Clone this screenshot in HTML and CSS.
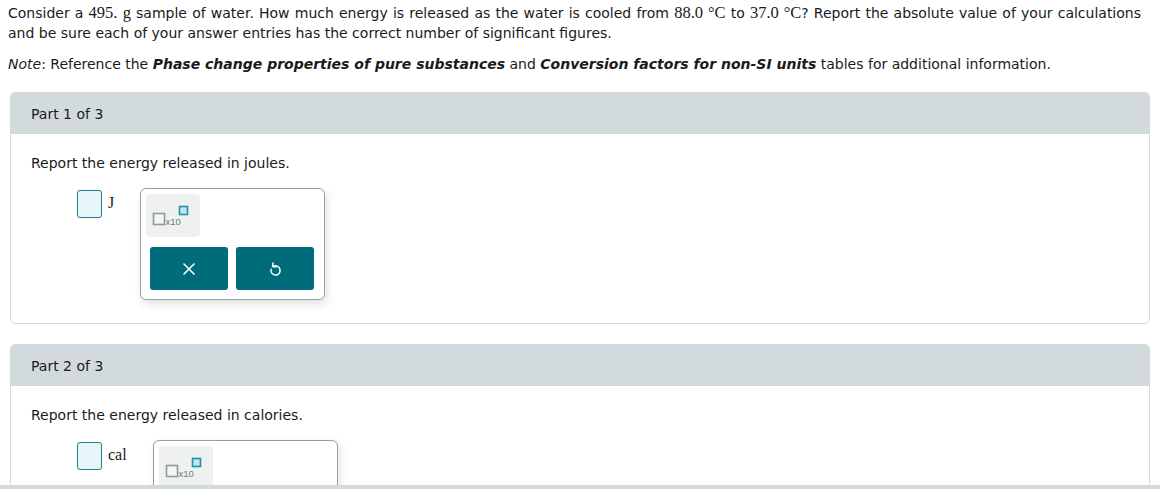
FILE: index.html
```html
<!DOCTYPE html>
<html>
<head>
<meta charset="utf-8">
<link rel="stylesheet" href="styles.css">
</head>
<body>
<div class="page">
  <p class="intro">Consider a <span class="m">495.</span> <span class="m">g</span> sample of water. How much energy is released as the water is cooled from <span class="m">88.0 °C</span> to <span class="m">37.0 °C</span>? Report the absolute value of your calculations and be sure each of your answer entries has the correct number of significant figures.</p>
  <p class="note"><i>Note</i>: Reference the <b><i>Phase change properties of pure substances</i></b> and <b><i>Conversion factors for non-SI units</i></b> tables for additional information.</p>

  <section class="part">
    <div class="part-head">Part 1 of 3</div>
    <div class="part-body">
      <p class="q">Report the energy released in joules.</p>
      <div class="answer">
        <span class="box"></span>
        <span class="unit">J</span>
        <div class="pad">
          <div class="sci">
            <svg width="42" height="22" viewBox="0 0 42 22">
              <rect x="1.5" y="8.5" width="11" height="11" fill="#f4f6f6" stroke="#8a9ca2" stroke-width="1.6"/>
              <text x="13.5" y="19.5" font-family="Liberation Sans, Arial, sans-serif" font-size="9.5" fill="#6b7a7f">x10</text>
              <rect x="27.5" y="1.5" width="8" height="8" fill="#bfe6ee" stroke="#1c93ab" stroke-width="1.6"/>
            </svg>
          </div>
          <div class="btns">
            <button class="btn" aria-label="clear">
              <svg width="14" height="14" viewBox="0 0 14 14"><path d="M2 2 L12 12 M12 2 L2 12" stroke="#fff" stroke-width="1.6" stroke-linecap="round"/></svg>
            </button>
            <button class="btn" aria-label="undo">
              <svg width="15" height="16" viewBox="0 0 15 16"><path d="M5.6 5.3 A4.6 4.6 0 1 1 3.1 8.2" fill="none" stroke="#fff" stroke-width="1.5" stroke-linecap="round"/><path d="M5 2 L4.6 5.4 L7.9 5.9" fill="none" stroke="#fff" stroke-width="1.5" stroke-linecap="round" stroke-linejoin="round"/></svg>
            </button>
          </div>
        </div>
      </div>
    </div>
  </section>

  <section class="part">
    <div class="part-head">Part 2 of 3</div>
    <div class="part-body">
      <p class="q">Report the energy released in calories.</p>
      <div class="answer">
        <span class="box"></span>
        <span class="unit">cal</span>
        <div class="pad">
          <div class="sci">
            <svg width="42" height="22" viewBox="0 0 42 22">
              <rect x="1.5" y="8.5" width="11" height="11" fill="#f4f6f6" stroke="#8a9ca2" stroke-width="1.6"/>
              <text x="13.5" y="19.5" font-family="Liberation Sans, Arial, sans-serif" font-size="9.5" fill="#6b7a7f">x10</text>
              <rect x="27.5" y="1.5" width="8" height="8" fill="#bfe6ee" stroke="#1c93ab" stroke-width="1.6"/>
            </svg>
          </div>
          <div class="btns">
            <button class="btn" aria-label="clear">
              <svg width="14" height="14" viewBox="0 0 14 14"><path d="M2 2 L12 12 M12 2 L2 12" stroke="#fff" stroke-width="1.6" stroke-linecap="round"/></svg>
            </button>
            <button class="btn" aria-label="undo">
              <svg width="15" height="16" viewBox="0 0 15 16"><path d="M5.6 5.3 A4.6 4.6 0 1 1 3.1 8.2" fill="none" stroke="#fff" stroke-width="1.5" stroke-linecap="round"/><path d="M5 2 L4.6 5.4 L7.9 5.9" fill="none" stroke="#fff" stroke-width="1.5" stroke-linecap="round" stroke-linejoin="round"/></svg>
            </button>
          </div>
        </div>
      </div>
    </div>
  </section>
</div>
<div class="hbar"></div>
</body>
</html>
```

FILE: styles.css
```css
html, body {
  margin: 0;
  padding: 0;
  background: #fff;
  overflow: hidden;
}
body {
  font-family: "DejaVu Sans", Verdana, sans-serif;
  font-size: 14px;
  color: #1a1a1a;
  height: 489px;
}
.page {
  padding: 3px 10px 0 10px;
}
.intro {
  margin: 0 9px 0 -2px;
  line-height: 20px;
  text-align: justify;
}
.m {
  font-family: "Liberation Serif", "Times New Roman", serif;
  font-size: 16.5px;
  line-height: 1;
}
.note {
  margin: 11px 0 0 -2px;
  line-height: 20px;
}
.part {
  border: 1px solid #d5dcde;
  border-radius: 5px;
  margin-top: 18px;
}
.part + .part {
  margin-top: 20px;
}
.part-head {
  background: #d2dadd;
  border-radius: 4px 4px 0 0;
  height: 40px;
  padding-top: 1px;
  line-height: 41px;
  padding-left: 20px;
}
.part-body {
  padding: 19px 20px 23px 20px;
}
.q {
  margin: 0;
  line-height: 20px;
}
.answer {
  display: flex;
  align-items: flex-start;
  margin: 15px 0 0 46px;
}
.box {
  width: 23px;
  height: 26px;
  border: 1px solid #1f7d8c;
  border-radius: 3px;
  background: #e7f4f8;
  margin-top: 2px;
}
.unit {
  font-family: "Liberation Serif", "Times New Roman", serif;
  font-size: 16px;
  margin-left: 6px;
  margin-top: 6px;
  line-height: 18px;
}
.pad {
  margin-left: 26px;
  width: 169px;
  border: 1px solid #8fa2a9;
  border-radius: 6px;
  background: #fff;
  padding: 5px 9px 9px 5px;
  box-shadow: 2px 4px 8px rgba(0, 0, 0, 0.12);
}
.sci {
  width: 54px;
  height: 43px;
  background: #eff1f1;
  border-radius: 4px;
  display: flex;
  align-items: center;
  justify-content: center;
  padding-top: 1px;
  box-sizing: border-box;
}
.btns {
  display: flex;
  gap: 8px;
  margin-top: 10px;
  padding-left: 4px;
}
.btn {
  width: 78px;
  height: 43px;
  border: none;
  border-radius: 3px;
  background: #006b7b;
  display: flex;
  align-items: center;
  justify-content: center;
  padding: 0;
}
.hbar {
  position: fixed;
  left: 0;
  right: 0;
  bottom: 0;
  height: 4px;
  background: #d2dadd;
}
```
